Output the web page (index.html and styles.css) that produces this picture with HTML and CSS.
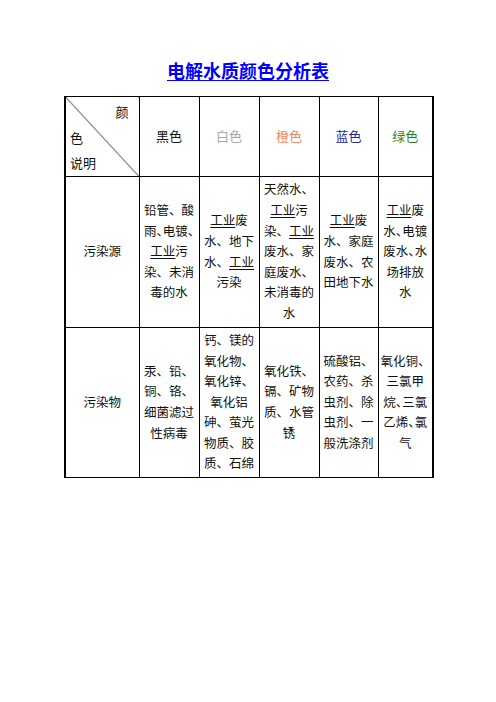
FILE: index.html
```html
<!DOCTYPE html>
<html lang="zh-CN">
<head>
<meta charset="utf-8">
<title>电解水质颜色分析表</title>
<link rel="stylesheet" href="styles.css">
</head>
<body>
<div class="page">
  <h1 class="title">电解水质颜色分析表</h1>
  <table class="grid">
    <colgroup>
      <col class="c0"><col class="c1"><col class="c2"><col class="c3"><col class="c4"><col class="c5">
    </colgroup>
    <tr class="head">
      <td class="diag">
        <div class="diag-in">
          <span class="d-r">颜</span>
          <span class="d-l">色</span>
          <span class="d-l">说明</span>
        </div>
      </td>
      <td class="k-black">黑色</td>
      <td class="k-white">白色</td>
      <td class="k-orange">橙色</td>
      <td class="k-blue">蓝色</td>
      <td class="k-green">绿色</td>
    </tr>
    <tr class="r2">
      <td>污染源</td>
      <td><span class="ln">铅管、酸</span><span class="ln">雨<span class="p">、</span>电镀<span class="p">、</span></span><span class="ln"><span class="u">工业</span>污</span><span class="ln">染、未消</span><span class="ln">毒的水</span></td>
      <td><span class="ln"><span class="u">工业</span>废</span><span class="ln">水、地下</span><span class="ln">水、<span class="u">工业</span></span><span class="ln">污染</span></td>
      <td><span class="ln">天然水、</span><span class="ln"><span class="u">工业</span>污</span><span class="ln">染、<span class="u">工业</span></span><span class="ln">废水、家</span><span class="ln">庭废水、</span><span class="ln">未消毒的</span><span class="ln">水</span></td>
      <td><span class="ln"><span class="u">工业</span>废</span><span class="ln">水、家庭</span><span class="ln">废水、农</span><span class="ln">田地下水</span></td>
      <td><span class="ln"><span class="u">工业</span>废</span><span class="ln">水<span class="p">、</span>电镀</span><span class="ln">废水<span class="p">、</span>水</span><span class="ln">场排放</span><span class="ln">水</span></td>
    </tr>
    <tr class="r3">
      <td>污染物</td>
      <td><span class="ln">汞、铅、</span><span class="ln">铜、铬、</span><span class="ln">细菌滤过</span><span class="ln">性病毒</span></td>
      <td><span class="ln">钙、镁的</span><span class="ln">氧化物、</span><span class="ln">氧化锌、</span><span class="ln">氧化铝</span><span class="ln">砷、萤光</span><span class="ln">物质、胶</span><span class="ln">质、石绵</span></td>
      <td><span class="ln">氧化铁、</span><span class="ln">镉、矿物</span><span class="ln">质、水管</span><span class="ln">锈</span></td>
      <td><span class="ln">硫酸铝、</span><span class="ln">农药、杀</span><span class="ln">虫剂、除</span><span class="ln">虫剂、一</span><span class="ln">般洗涤剂</span></td>
      <td><span class="ln">氧化铜、</span><span class="ln">三氯甲</span><span class="ln">烷<span class="p">、</span>三氯</span><span class="ln">乙烯<span class="p">、</span>氯</span><span class="ln">气</span></td>
    </tr>
  </table>
</div>
</body>
</html>
```

FILE: styles.css
```css
html, body {
  margin: 0;
  padding: 0;
  background: #ffffff;
}

body {
  font-family: "Noto Sans CJK SC", "Noto Sans", sans-serif;
  color: #111111;
}

.page {
  width: 496px;
  padding-top: 58px;
}

.title {
  margin: 0 0 14px 0;
  font-size: 18px;
  line-height: 24px;
  font-weight: 700;
  text-align: center;
  color: #0000ff;
  text-decoration: underline;
  text-underline-offset: 2px;
  text-decoration-thickness: 1px;
}

.grid {
  margin-left: 64px;
  width: 368px;
  table-layout: fixed;
  border-collapse: collapse;
  font-size: 12.5px;
  line-height: 20.6px;
}

.c0 { width: 74px; }
.c1 { width: 60px; }
.c2 { width: 60px; }
.c3 { width: 60px; }
.c4 { width: 59px; }
.c5 { width: 55px; }

.grid td {
  border: 1px solid #000000;
  padding: 0 2px;
  text-align: center;
  vertical-align: middle;
}

.grid tr td:first-child {
  border-left-width: 2px;
}

.grid tr td:last-child {
  border-right-width: 2px;
}

.head {
  height: 79px;
}

.r2 {
  height: 151px;
}

.r3 {
  height: 150px;
}

.head td {
  font-size: 13px;
}

.diag {
  background: linear-gradient(to top right, transparent calc(50% - 0.7px), #333333 50%, transparent calc(50% + 0.7px));
  vertical-align: top;
}

.diag-in {
  display: flex;
  flex-direction: column;
  padding-top: 2px;
  line-height: 25.5px;
}

.d-r {
  text-align: right;
  padding-right: 8px;
}

.d-l {
  text-align: left;
  padding-left: 2px;
}

.k-black { color: #111111; }
.k-white { color: #a8a8a8; }
.k-orange { color: #f4845f; }
.k-blue { color: #23239a; }
.k-green { color: #1f8a1f; }

.ln {
  display: block;
  white-space: nowrap;
}

.u {
  text-decoration: underline;
  text-underline-offset: 2px;
}

.p {
  letter-spacing: -0.5em;
}
```
